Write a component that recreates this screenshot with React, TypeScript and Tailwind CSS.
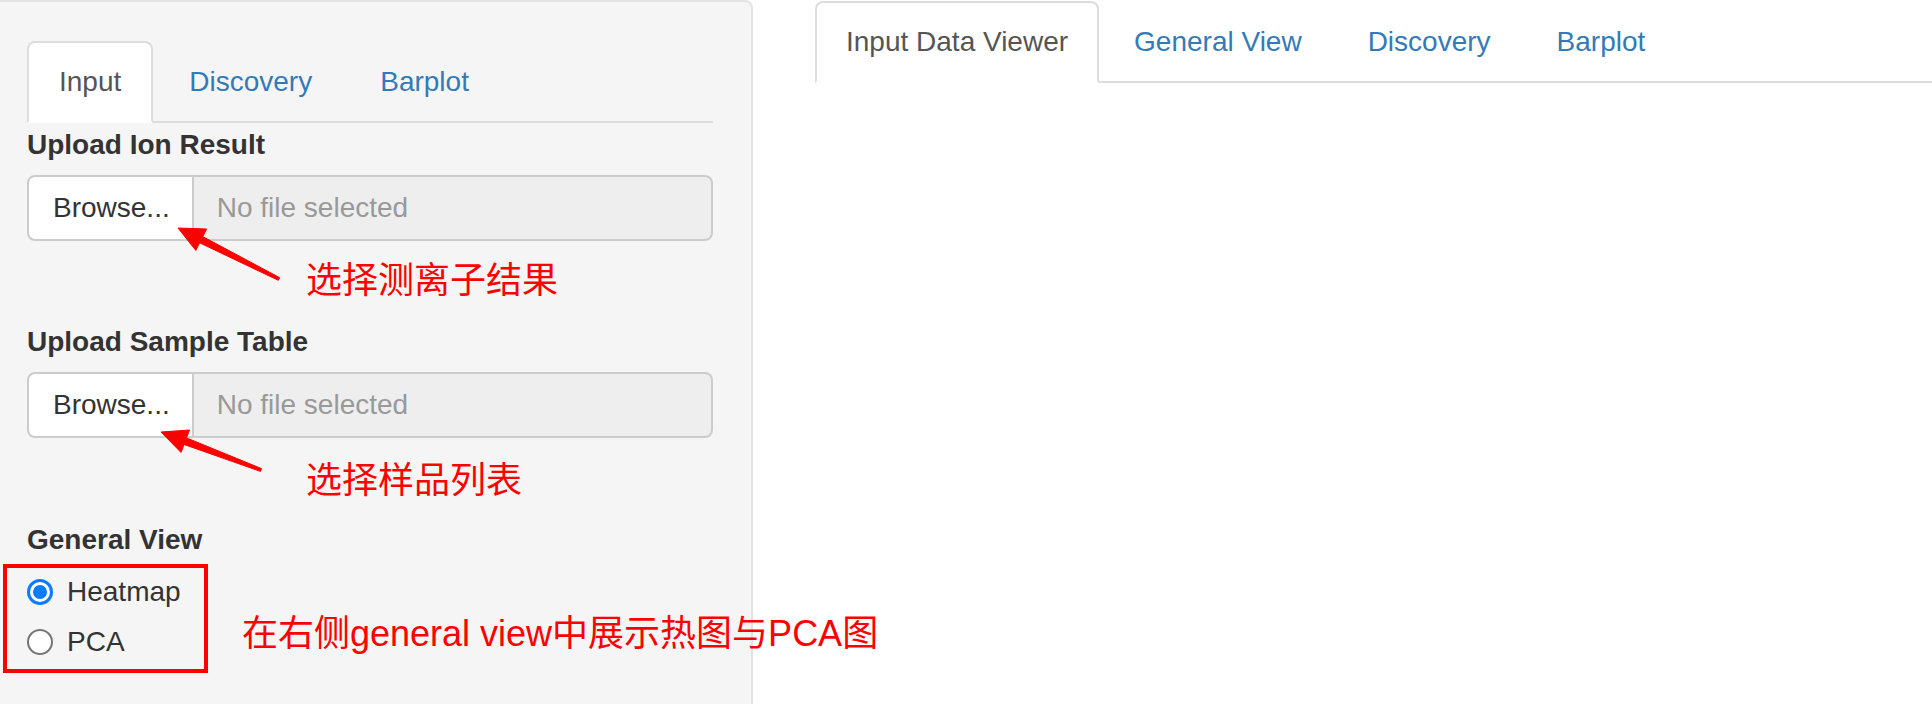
import React from "react";

const font = { fontFamily: '"Liberation Sans", Arial, "Noto Sans CJK SC", sans-serif' };

function Tabs({ items, active, wide }: { items: string[]; active: number; wide?: boolean }) {
  const px = wide ? "px-[30px]" : "px-[29px]";
  return (
    <ul className="flex border-b-2 border-[#dddddd] h-[82px]">
      {items.map((t, i) => (
        <li key={t} className="-mb-[2px] mr-[4px]">
          <a
            className={
              i === active
                ? `block h-[82px] ${px} py-[19px] leading-[40px] text-[28px] text-[#555555] bg-white border-2 border-[#dddddd] border-b-white rounded-t-[8px]`
                : `block h-[82px] ${px} py-[19px] leading-[40px] text-[28px] text-[#337ab7] border-2 border-transparent rounded-t-[8px]`
            }
          >
            {t}
          </a>
        </li>
      ))}
    </ul>
  );
}

function FileInput() {
  return (
    <div className="flex h-[66px]">
      <div className="flex items-center h-full pl-[24px] pr-[22px] bg-white border-2 border-[#cccccc] rounded-l-[8px] text-[28px] text-[#333333]">
        Browse...
      </div>
      <div className="flex-1 flex items-center h-full pl-[23px] bg-[#eeeeee] border-2 border-l-0 border-[#cccccc] rounded-r-[8px] text-[28px] text-[#999999]">
        No file selected
      </div>
    </div>
  );
}

function Radio({ checked, label }: { checked: boolean; label: string }) {
  return (
    <div className="flex items-center h-[40px]">
      {checked ? (
        <span className="w-[26px] h-[26px] rounded-full border-[3px] border-[#0b7bff] bg-white flex items-center justify-center">
          <span className="w-[14px] h-[14px] rounded-full bg-[#0b7bff]" />
        </span>
      ) : (
        <span className="w-[26px] h-[26px] rounded-full border-2 border-[#767676] bg-white" />
      )}
      <span className="ml-[14px] text-[28px] text-[#333333] leading-[40px]">{label}</span>
    </div>
  );
}

export default function App() {
  return (
    <div className="relative w-[1932px] h-[704px] overflow-hidden bg-white flex" style={font}>
      <div className="w-[753px] shrink-0 h-[720px] bg-[#f5f5f5] border-t-2 border-r-2 border-[#e3e3e3] rounded-tr-[8px] pl-[27px] pr-[38px] pt-[39px]">
        <Tabs items={["Input", "Discovery", "Barplot"]} active={0} wide />
        <div className="mt-[2px] mb-[10px] h-[40px] leading-[40px] text-[28px] font-bold text-[#333333]">Upload Ion Result</div>
        <FileInput />
        <div className="mt-[81px] mb-[10px] h-[40px] leading-[40px] text-[28px] font-bold text-[#333333]">Upload Sample Table</div>
        <FileInput />
        <div className="mt-[82px] h-[40px] leading-[40px] text-[28px] font-bold text-[#333333]">General View</div>
        <div className="mt-[12px]">
          <Radio checked label="Heatmap" />
        </div>
        <div className="mt-[10px]">
          <Radio checked={false} label="PCA" />
        </div>
      </div>
      <div className="flex-1 ml-[62px] pt-[1px]">
        <Tabs items={["Input Data Viewer", "General View", "Discovery", "Barplot"]} active={0} />
      </div>

      {/* annotations */}
      <div className="absolute left-[3px] top-[564px] w-[205px] h-[109px] border-4 border-[#ff0000]" />
      <svg className="absolute left-0 top-0" width="1932" height="704" viewBox="0 0 1932 704">
        <polygon
          fill="#ff0000"
          stroke="#ff0000"
          strokeWidth="1"
          strokeLinejoin="round"
          points="178,228 206.6,229 202.8,236.6 279.7,277.7 278.3,280.3 199.6,242.8 195.8,250.4"
        />
        <polygon
          fill="#ff0000"
          stroke="#ff0000"
          strokeWidth="1"
          strokeLinejoin="round"
          points="161,432 189.6,430 186.5,437.9 261.5,468.6 260.5,471.4 184.1,444.5 181,452.4"
        />
      </svg>
      <div className="absolute left-[306px] top-[261px] text-[36px] leading-[40px] text-[#ff0000] whitespace-nowrap">选择测离子结果</div>
      <div className="absolute left-[306px] top-[461px] text-[36px] leading-[40px] text-[#ff0000] whitespace-nowrap">选择样品列表</div>
      <div className="absolute left-[242px] top-[614px] text-[36px] leading-[40px] text-[#ff0000] whitespace-nowrap">在右侧general view中展示热图与PCA图</div>
    </div>
  );
}
